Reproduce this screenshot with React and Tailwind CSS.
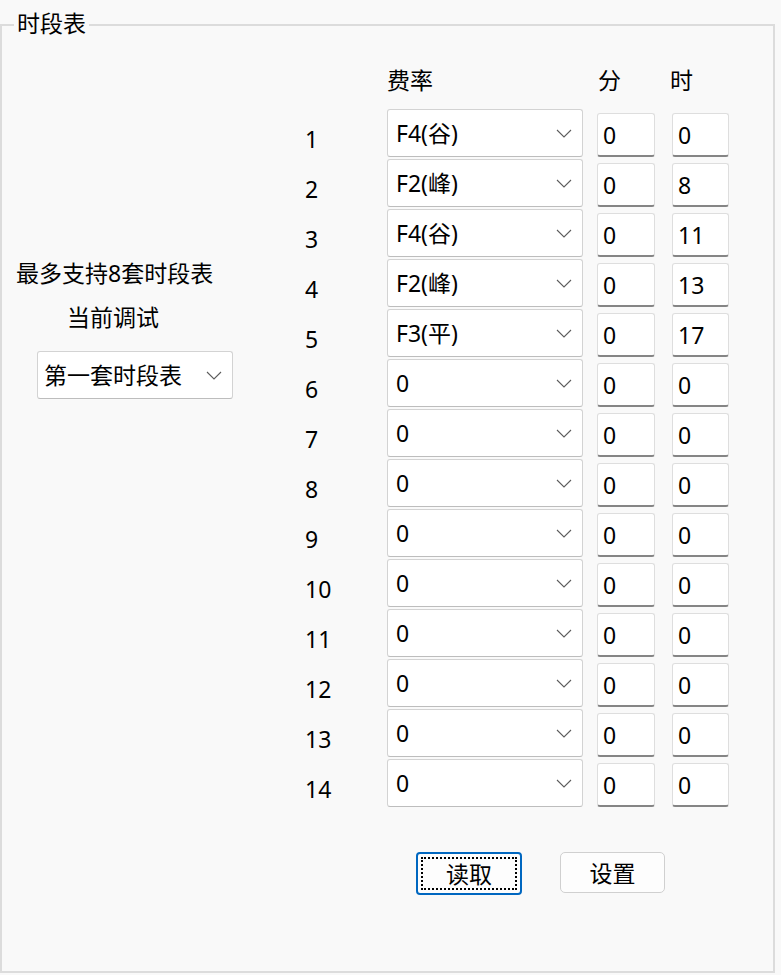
import React from 'react';

const font = "font-['Noto_Sans','Noto_Sans_CJK_SC',sans-serif]";

const rows = [
  { rate: 'F4(谷)', min: '0', hour: '0' },
  { rate: 'F2(峰)', min: '0', hour: '8' },
  { rate: 'F4(谷)', min: '0', hour: '11' },
  { rate: 'F2(峰)', min: '0', hour: '13' },
  { rate: 'F3(平)', min: '0', hour: '17' },
  { rate: '0', min: '0', hour: '0' },
  { rate: '0', min: '0', hour: '0' },
  { rate: '0', min: '0', hour: '0' },
  { rate: '0', min: '0', hour: '0' },
  { rate: '0', min: '0', hour: '0' },
  { rate: '0', min: '0', hour: '0' },
  { rate: '0', min: '0', hour: '0' },
  { rate: '0', min: '0', hour: '0' },
  { rate: '0', min: '0', hour: '0' },
];

const Chevron = () => (
  <svg width="16" height="9" viewBox="0 0 16 9" className="shrink-0">
    <polyline points="1,1 8,8 15,1" fill="none" stroke="#5c5c5c" strokeWidth="1.1" />
  </svg>
);

const Combo = ({ value }) => (
  <div className="flex h-[48px] w-[196px] items-center justify-between rounded-[3px] border border-[#d3d3d3] border-b-[#bdbdbd] bg-white pl-[8px] pr-[10px]">
    <span className="leading-[28px]">{value}</span>
    <Chevron />
  </div>
);

const TextBox = ({ value, width }) => (
  <div className={`mt-[4px] flex h-[44px] items-center rounded-[3px] border border-[#dedede] border-b-2 border-b-[#858585] bg-white pl-[5px] ${width}`}>
    <span className="leading-[28px]">{value}</span>
  </div>
);

const App = () => {
  return (
    <div className={`h-[975px] w-[781px] bg-[#f9f9f9] pt-[24px] text-[23px] text-black ${font}`}>
      <div className="relative h-[949px] w-[775px] border-2 border-[#dcdcdc]">
        <span className="absolute left-[12px] top-[-18px] bg-[#f9f9f9] px-[3px] leading-[30px]">时段表</span>
        <div className="flex">
          <div className="w-[303px] pt-[232px]">
            <div className="pl-[14px] leading-[30px]">最多支持8套时段表</div>
            <div className="mt-[14px] pl-[65px] leading-[30px]">当前调试</div>
            <div className="ml-[35px] mt-[19px] flex h-[48px] w-[196px] items-center justify-between rounded-[3px] border border-[#d3d3d3] border-b-[#bdbdbd] bg-white pl-[6px] pr-[10px]">
              <span className="leading-[28px]">第一套时段表</span>
              <Chevron />
            </div>
          </div>
          <div className="pt-[39px]">
            <div className="flex h-[30px] leading-[30px]">
              <div className="w-[82px]" />
              <div className="w-[196px]">费率</div>
              <div className="ml-[15px] w-[58px]">分</div>
              <div className="ml-[14px]">时</div>
            </div>
            <div className="mt-[14px]">
              {rows.map((r, i) => (
                <div key={i} className="flex h-[50px] items-start">
                  <div className="w-[82px] pt-[16px] leading-[28px]">{i + 1}</div>
                  <Combo value={r.rate} />
                  <div className="ml-[14px]">
                    <TextBox value={r.min} width="w-[58px]" />
                  </div>
                  <div className="ml-[17px]">
                    <TextBox value={r.hour} width="w-[57px]" />
                  </div>
                </div>
              ))}
            </div>
            <div className="ml-[111px] mt-[43px] flex gap-[38px]">
              <button className="relative flex h-[43px] w-[106px] items-center justify-center rounded-[4px] border-2 border-[#0067c0] bg-[#fdfdfd] leading-[28px]">
                <span className="absolute inset-[3px] border-2 border-dotted border-black" />
                读取
              </button>
              <button className="flex h-[41px] w-[105px] items-center justify-center rounded-[5px] border border-[#d0d0d0] bg-[#fdfdfd] leading-[28px]">
                设置
              </button>
            </div>
          </div>
        </div>
      </div>
    </div>
  );
};

export default App;
